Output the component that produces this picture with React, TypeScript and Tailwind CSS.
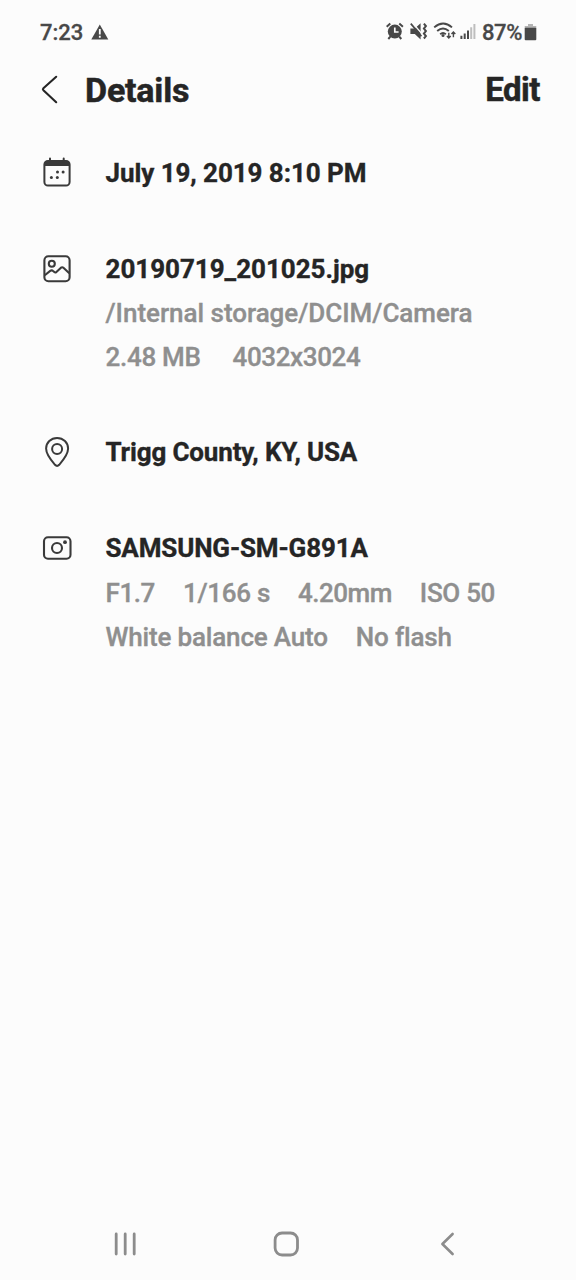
import React from "react";

type SectionProps = {
  icon: React.ReactNode;
  title: string;
  styles?: string;
  titleStyles?: string;
  children?: React.ReactNode;
};

const CalendarIcon: React.FC = () => (
  <svg width="32" height="32" viewBox="0.5 0.5 32 32" fill="none" stroke="#3a3a3a" strokeWidth="2">
    <rect x="3.9" y="4.4" width="25.2" height="24.7" rx="3.6" />
    <path d="M4 9.4V8a4 4 0 0 1 4-4h17a4 4 0 0 1 4 4v1.4z" fill="#3a3a3a" stroke="none" />
    <path d="M9.5 2v3M23.2 2v3" strokeLinecap="round" />
    <g fill="#3a3a3a" stroke="none">
      <circle cx="17" cy="15.4" r="1.5" />
      <circle cx="22.6" cy="15.4" r="1.5" />
      <circle cx="10.9" cy="21" r="1.5" />
      <circle cx="16.8" cy="21" r="1.5" />
    </g>
  </svg>
);

const PictureIcon: React.FC = () => (
  <svg width="32" height="32" viewBox="0.5 0.5 32 32" fill="none" stroke="#3a3a3a" strokeWidth="2.1">
    <rect x="3.9" y="3.7" width="25.2" height="25" rx="4" />
    <circle cx="11.3" cy="11.3" r="3" />
    <path d="M4.3 22.7l5.4-4.3q1.6-1.2 2.9.1l1.2 1.1q1 .9 2.1-.2l4.3-4q1.5-1.3 3 .1l5.6 5.2" strokeLinejoin="round" />
  </svg>
);

const PinIcon: React.FC = () => (
  <svg width="32" height="32" viewBox="0 0 32 32" fill="none" stroke="#3a3a3a" strokeWidth="2">
    <path d="M16.1 1.9c-6.2 0-11 4.8-11 10.7 0 5.7 4.8 11.6 8.9 16.2q2.1 2.2 4.2 0c4.1-4.6 8.9-10.5 8.9-16.2 0-5.9-4.8-10.7-11-10.7z" />
    <circle cx="16.1" cy="13" r="5" />
  </svg>
);

const CameraIcon: React.FC = () => (
  <svg width="32" height="32" viewBox="0 0 32 32" fill="none" stroke="#3a3a3a" strokeWidth="2.1">
    <rect x="3" y="5.2" width="26.5" height="21.6" rx="4" />
    <circle cx="16" cy="16" r="5" />
    <circle cx="24" cy="10.2" r="1.9" fill="#3a3a3a" stroke="none" />
  </svg>
);

const StatusIcons: React.FC = () => (
  <svg width="92" height="20" viewBox="386 23 92 20" fill="none" stroke="#484848">
    {/* alarm */}
    <circle cx="394.8" cy="32.6" r="7" fill="#484848" stroke="none" />
    <path d="M386.7 27.8l3.6-3.2M402.9 27.8l-3.6-3.2M390.3 37.6l-2 2.4M399.3 37.6l2 2.4" strokeWidth="2" />
    <path d="M394.8 28.6v4.4h3.8" stroke="#fcfcfc" strokeWidth="1.7" />
    {/* muted, vibrating */}
    <path d="M410.4 29.6h4.4l5.8-5.4v16.2l-5.8-5.4h-4.4z" fill="#484848" stroke="none" />
    <path d="M412.6 24l9.2 10.6" stroke="#fcfcfc" strokeWidth="1.4" />
    <path d="M410.8 24.6l10.6 12.6" strokeWidth="1.7" />
    <path d="M423.9 24.6l2 2.5-2 2.5 2 2.5-2 2.5 2 2.5-2 2.4" strokeWidth="2" />
    {/* wifi */}
    <path d="M434.2 28.4q8.9-7.8 17.8 0M437.2 32q5.8-5.2 11.6 0M440.2 35.2q2.8-2.5 5.6 0" strokeWidth="1.9" />
    <circle cx="443" cy="36.4" r="1.5" fill="#484848" stroke="none" />
    <path d="M448.8 33.8v5M446.9 37l1.9 2 1.9-2M453.4 38.2v-5M451.5 35l1.9-2 1.9 2" strokeWidth="1.4" />
    {/* signal */}
    <path d="M461.4 40v-3.2M464.7 40v-5.4M468 40v-8.4" strokeWidth="2" />
    <path d="M471.2 40V28.2M474.4 40V25" stroke="#bebebe" strokeWidth="2" />
  </svg>
);

const Section: React.FC<SectionProps> = ({ icon, title, styles = "", titleStyles = "", children }) => (
  <section className={`flex ${styles}`}>
    <div className="flex h-[44px] w-[64.5px] shrink-0 items-center">{icon}</div>
    <div className="text-[26px] leading-[44px] font-medium whitespace-nowrap text-[#8f8f8f] [-webkit-text-stroke:0.35px]">
      <h2 className={`font-bold text-[#252525] ${titleStyles}`}>{title}</h2>
      {children}
    </div>
  </section>
);

const App: React.FC = () => {
  return (
    <div className="flex h-[1280px] w-[576px] flex-col overflow-hidden bg-[#fcfcfc] font-['Roboto',sans-serif]">
      <div className="mb-[2px] flex h-16 items-center justify-between pr-[39px] pl-10 text-[22px] font-medium text-[#484848] [-webkit-text-stroke:0.3px]">
        <div className="flex items-center gap-2">
          <span>7:23</span>
          <svg className="-mt-px" width="18" height="16" viewBox="0 0 18 16">
            <path d="M8.8.4L17.3 15.4H.3z" fill="#484848" />
            <path d="M8.8 5v5.4M8.8 11.8v2" stroke="#fcfcfc" strokeWidth="1.8" />
          </svg>
        </div>
        <div className="flex items-center">
          <StatusIcons />
          <span className="ml-[4px] tracking-[-0.4px]">87%</span>
          <svg className="ml-[2px]" width="13" height="18" viewBox="0 0 13 18">
            <path d="M4 1h5v2h3.3v3H.7V3H4z" fill="#b4b4b4" />
            <rect x=".7" y="4.8" width="11.6" height="12.4" rx="1" fill="#484848" />
          </svg>
        </div>
      </div>

      <header className="flex h-12 items-center pr-9 pl-10 text-[#252525] [-webkit-text-stroke:0.5px]">
        <svg width="20" height="30" viewBox="0 0 20 30" fill="none" stroke="#252525" strokeWidth="2.1" strokeLinecap="round">
          <path d="M16.2 1.8L3.4 13.2q-1 1 0 2L16.2 27.2" />
        </svg>
        <h1 className="ml-[25px] text-[34px] font-bold tracking-[-0.2px]">Details</h1>
        <button className="ml-auto text-[33px] font-bold tracking-[-0.5px]">Edit</button>
      </header>

      <main className="mt-[37px] flex flex-col gap-[52px] pl-[41px]">
        <Section icon={<CalendarIcon />} title="July 19, 2019 8:10 PM" titleStyles="tracking-[-0.07px]" />
        <Section icon={<PictureIcon />} title="20190719_201025.jpg" titleStyles="tracking-[-0.03px]">
          <p className="tracking-[-0.03px]">/Internal storage/DCIM/Camera</p>
          <p className="flex gap-8">
            <span className="tracking-[-0.3px]">2.48 MB</span>
            <span className="tracking-[-0.4px]">4032x3024</span>
          </p>
        </Section>
        <Section icon={<PinIcon />} title="Trigg County, KY, USA" styles="-mt-px" titleStyles="tracking-[-0.15px]" />
        <Section icon={<CameraIcon />} title="SAMSUNG-SM-G891A" titleStyles="mb-px tracking-[-0.15px]">
          <p className="flex gap-7 tracking-[-0.3px]">
            <span className="tracking-[-0.4px]">F1.7</span>
            <span>1/166 s</span>
            <span className="tracking-[-0.5px]">4.20mm</span>
            <span>ISO 50</span>
          </p>
          <p className="flex gap-7 tracking-[-0.17px]">
            <span>White balance Auto</span>
            <span>No flash</span>
          </p>
        </Section>
      </main>

      <nav className="mt-auto flex h-[72px] items-center pl-[113px]">
        <svg width="24" height="24" viewBox="0 0 24 24" stroke="#8c8c8c" strokeWidth="2.8" strokeLinecap="round">
          <path d="M3.2 2v20M12.2 2v20M21.2 2v20" />
        </svg>
        <svg className="ml-[136px]" width="26" height="26" viewBox="-.3 0 26 26" fill="none" stroke="#8c8c8c" strokeWidth="2.8">
          <rect x="1.8" y="2" width="22.4" height="22" rx="7" />
        </svg>
        <svg className="ml-[140px]" width="16" height="24" viewBox="0 0 16 24" fill="none" stroke="#8c8c8c" strokeWidth="2.6" strokeLinecap="round" strokeLinejoin="round">
          <path d="M13.6 2L3.4 12l10.2 10" />
        </svg>
      </nav>
    </div>
  );
};

export default App;
